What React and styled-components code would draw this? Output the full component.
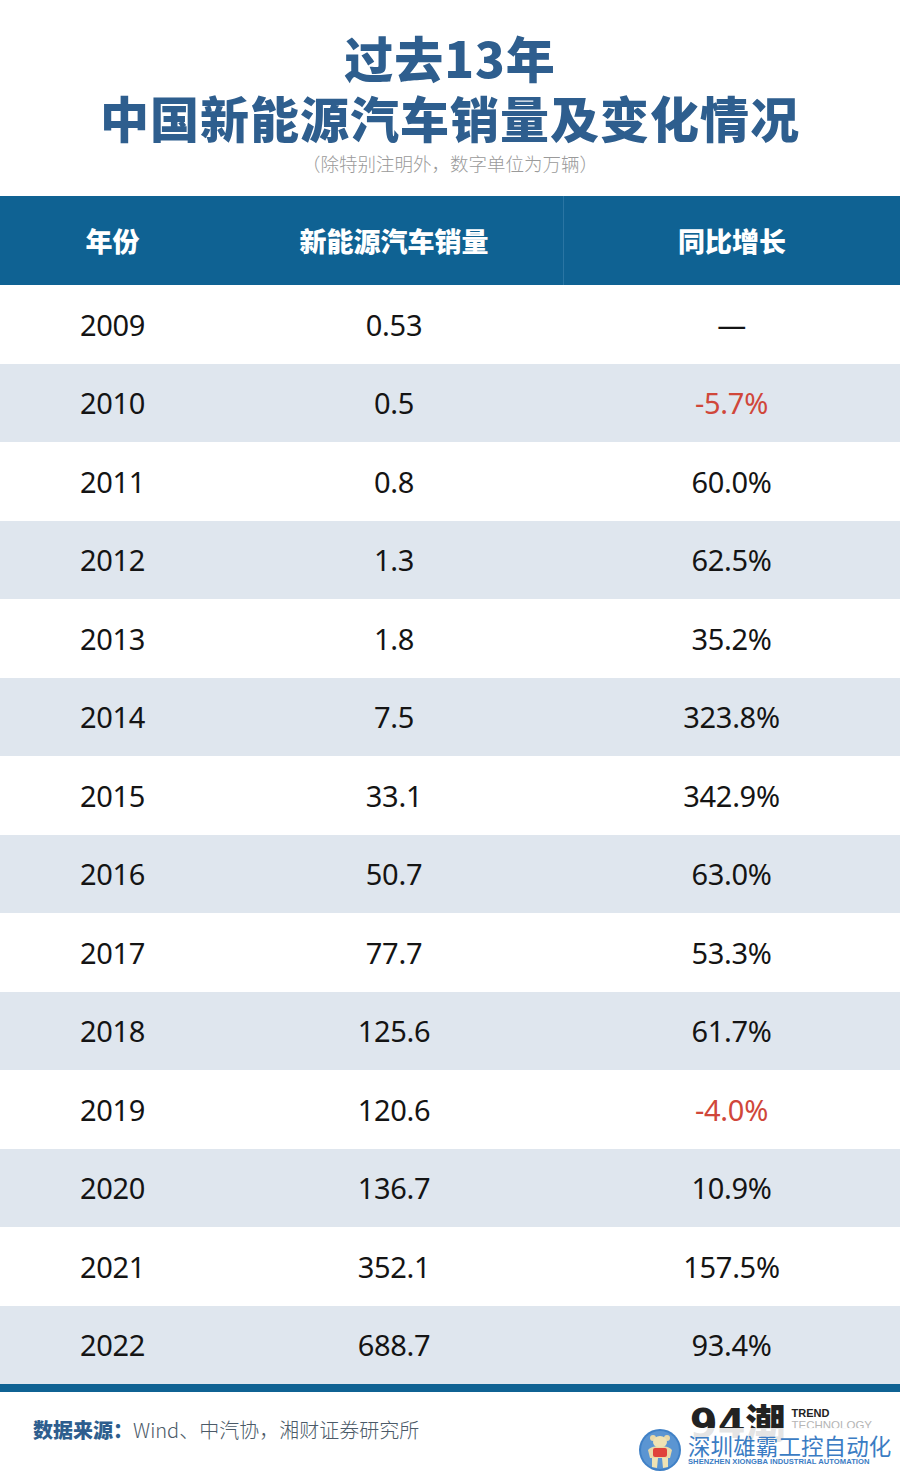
import React from "react";
import styled, { createGlobalStyle } from "styled-components";

const BLUE = "#0f6293";
const TITLE = "#2e5e8e";
const RED = "#d0473a";
const STRIPE = "#dfe6ee";
const FONT = `"Noto Sans", "Noto Sans CJK SC", sans-serif`;
const CJK = `"Noto Sans CJK SC", "Noto Sans", sans-serif`;

const Global = createGlobalStyle`
  html, body { margin: 0; padding: 0; background: #fff; }
  body { font-family: ${CJK}; }
  * { box-sizing: border-box; }
`;

const Page = styled.div`
  width: 900px;
  min-height: 1475px;
  background: #fff;
  display: flex;
  flex-direction: column;
`;

const Head = styled.header`
  padding-top: 27px;
  display: flex;
  flex-direction: column;
  align-items: center;
`;

const Title = styled.h1`
  margin: 0;
  font-family: ${CJK};
  font-weight: 900;
  font-size: 49px;
  line-height: 60px;
  color: ${TITLE};
  text-align: center;
  letter-spacing: 1px;
`;

const Sub = styled.p`
  margin: 4px 0 21px;
  font-size: 18.5px;
  line-height: 24px;
  color: #9a9a9a;
  font-weight: 300;
`;

const Grid = styled.div`
  display: grid;
  grid-template-columns: 225px 338px 337px;
  align-items: center;
  height: ${p => p.$h}px;
  background: ${p => p.$bg};
`;

const HeadCell = styled.div`
  height: 100%;
  display: flex;
  align-items: center;
  justify-content: center;
  color: #fff;
  font-weight: 900;
  font-size: 27px;
  border-left: ${p => (p.$split ? "1px solid #2a75a3" : "none")};
`;

const Cell = styled.div`
  text-align: center;
  font-family: ${FONT};
  font-size: 29px;
  font-weight: 400;
  color: ${p => (p.$neg ? RED : "#141414")};
  letter-spacing: -0.3px;
`;

const Bar = styled.div`
  height: 8px;
  background: ${BLUE};
`;

const Footer = styled.footer`
  position: relative;
  flex: 1;
  display: flex;
  align-items: center;
  justify-content: space-between;
  padding: 0 28px 8px 33px;
`;

const Source = styled.p`
  margin: 0;
  font-size: 20px;
  color: #4b5a68;
  font-weight: 300;
  b { color: ${TITLE}; font-weight: 900; }
`;

const Brand = styled.div`
  display: flex;
  align-items: flex-start;
  gap: 6px;
  margin-top: -12px;
`;

const BrandMark = styled.span`
  font-family: "DejaVu Sans", ${CJK};
  font-weight: 900;
  font-size: 40px;
  line-height: 38px;
  color: #222;
`;

const BrandText = styled.div`
  display: flex;
  flex-direction: column;
  font-family: "Liberation Sans", sans-serif;
  line-height: 12px;
  padding-top: 2px;
  span:first-child { font-size: 11px; font-weight: 700; color: #222; }
  span:last-child { font-size: 11.5px; color: #b5b5b5; font-weight: 300; }
`;

const Mark = styled.div`
  position: absolute;
  left: 638px;
  top: 36px;
  display: flex;
  align-items: center;
  gap: 6px;
  background: rgba(255, 255, 255, 0.88);
  padding-right: 4px;
`;

const MarkText = styled.div`
  display: flex;
  flex-direction: column;
  color: #3b7cc3;
  strong {
    font-weight: 400;
    font-size: 22.5px;
    line-height: 24px;
    letter-spacing: 0.1px;
  }
  small {
    font-family: "Liberation Sans", sans-serif;
    font-size: 7.6px;
    font-weight: 700;
    line-height: 10px;
    letter-spacing: 0.05px;
  }
`;

const rows = [
  ["2009", "0.53", "—"],
  ["2010", "0.5", "-5.7%"],
  ["2011", "0.8", "60.0%"],
  ["2012", "1.3", "62.5%"],
  ["2013", "1.8", "35.2%"],
  ["2014", "7.5", "323.8%"],
  ["2015", "33.1", "342.9%"],
  ["2016", "50.7", "63.0%"],
  ["2017", "77.7", "53.3%"],
  ["2018", "125.6", "61.7%"],
  ["2019", "120.6", "-4.0%"],
  ["2020", "136.7", "10.9%"],
  ["2021", "352.1", "157.5%"],
  ["2022", "688.7", "93.4%"],
];

function Bear() {
  return (
    <svg width="44" height="44" viewBox="0 0 44 44">
      <circle cx="22" cy="22" r="21" fill="#3f80c6" />
      <circle cx="22" cy="22" r="19" fill="#5b95d2" />
      <circle cx="15" cy="10" r="3" fill="#e9d9a8" />
      <circle cx="29" cy="10" r="3" fill="#e9d9a8" />
      <ellipse cx="22" cy="14" rx="7" ry="6" fill="#efe2b4" />
      <path d="M10 22 Q14 17 22 19 Q30 17 34 22 L32 30 L12 30 Z" fill="#e9d9a8" />
      <rect x="15" y="20" width="14" height="9" rx="2" fill="#e0423a" />
      <path d="M14 30 L20 30 L19 40 L14 39 Z M24 30 L30 30 L30 39 L25 40 Z" fill="#efe2b4" />
    </svg>
  );
}

export default function App() {
  return (
    <Page>
      <Global />
      <Head>
        <Title>
          过去13年
          <br />
          中国新能源汽车销量及变化情况
        </Title>
        <Sub>（除特别注明外，数字单位为万辆）</Sub>
      </Head>

      <Grid $h={89} $bg={BLUE}>
        <HeadCell>年份</HeadCell>
        <HeadCell>新能源汽车销量</HeadCell>
        <HeadCell $split>同比增长</HeadCell>
      </Grid>

      {rows.map(([y, v, g], i) => (
        <Grid key={y} $h={78.5} $bg={i % 2 ? STRIPE : "#fff"}>
          <Cell>{y}</Cell>
          <Cell>{v}</Cell>
          <Cell $neg={g.startsWith("-")}>{g}</Cell>
        </Grid>
      ))}

      <Bar />

      <Footer>
        <Source>
          <b>数据来源：</b>Wind、中汽协，湘财证券研究所
        </Source>
        <Brand>
          <BrandMark>94潮</BrandMark>
          <BrandText>
            <span>TREND</span>
            <span>TECHNOLOGY</span>
          </BrandText>
        </Brand>
        <Mark>
          <Bear />
          <MarkText>
            <strong>深圳雄霸工控自动化</strong>
            <small>SHENZHEN XIONGBA INDUSTRIAL AUTOMATION</small>
          </MarkText>
        </Mark>
      </Footer>
    </Page>
  );
}
